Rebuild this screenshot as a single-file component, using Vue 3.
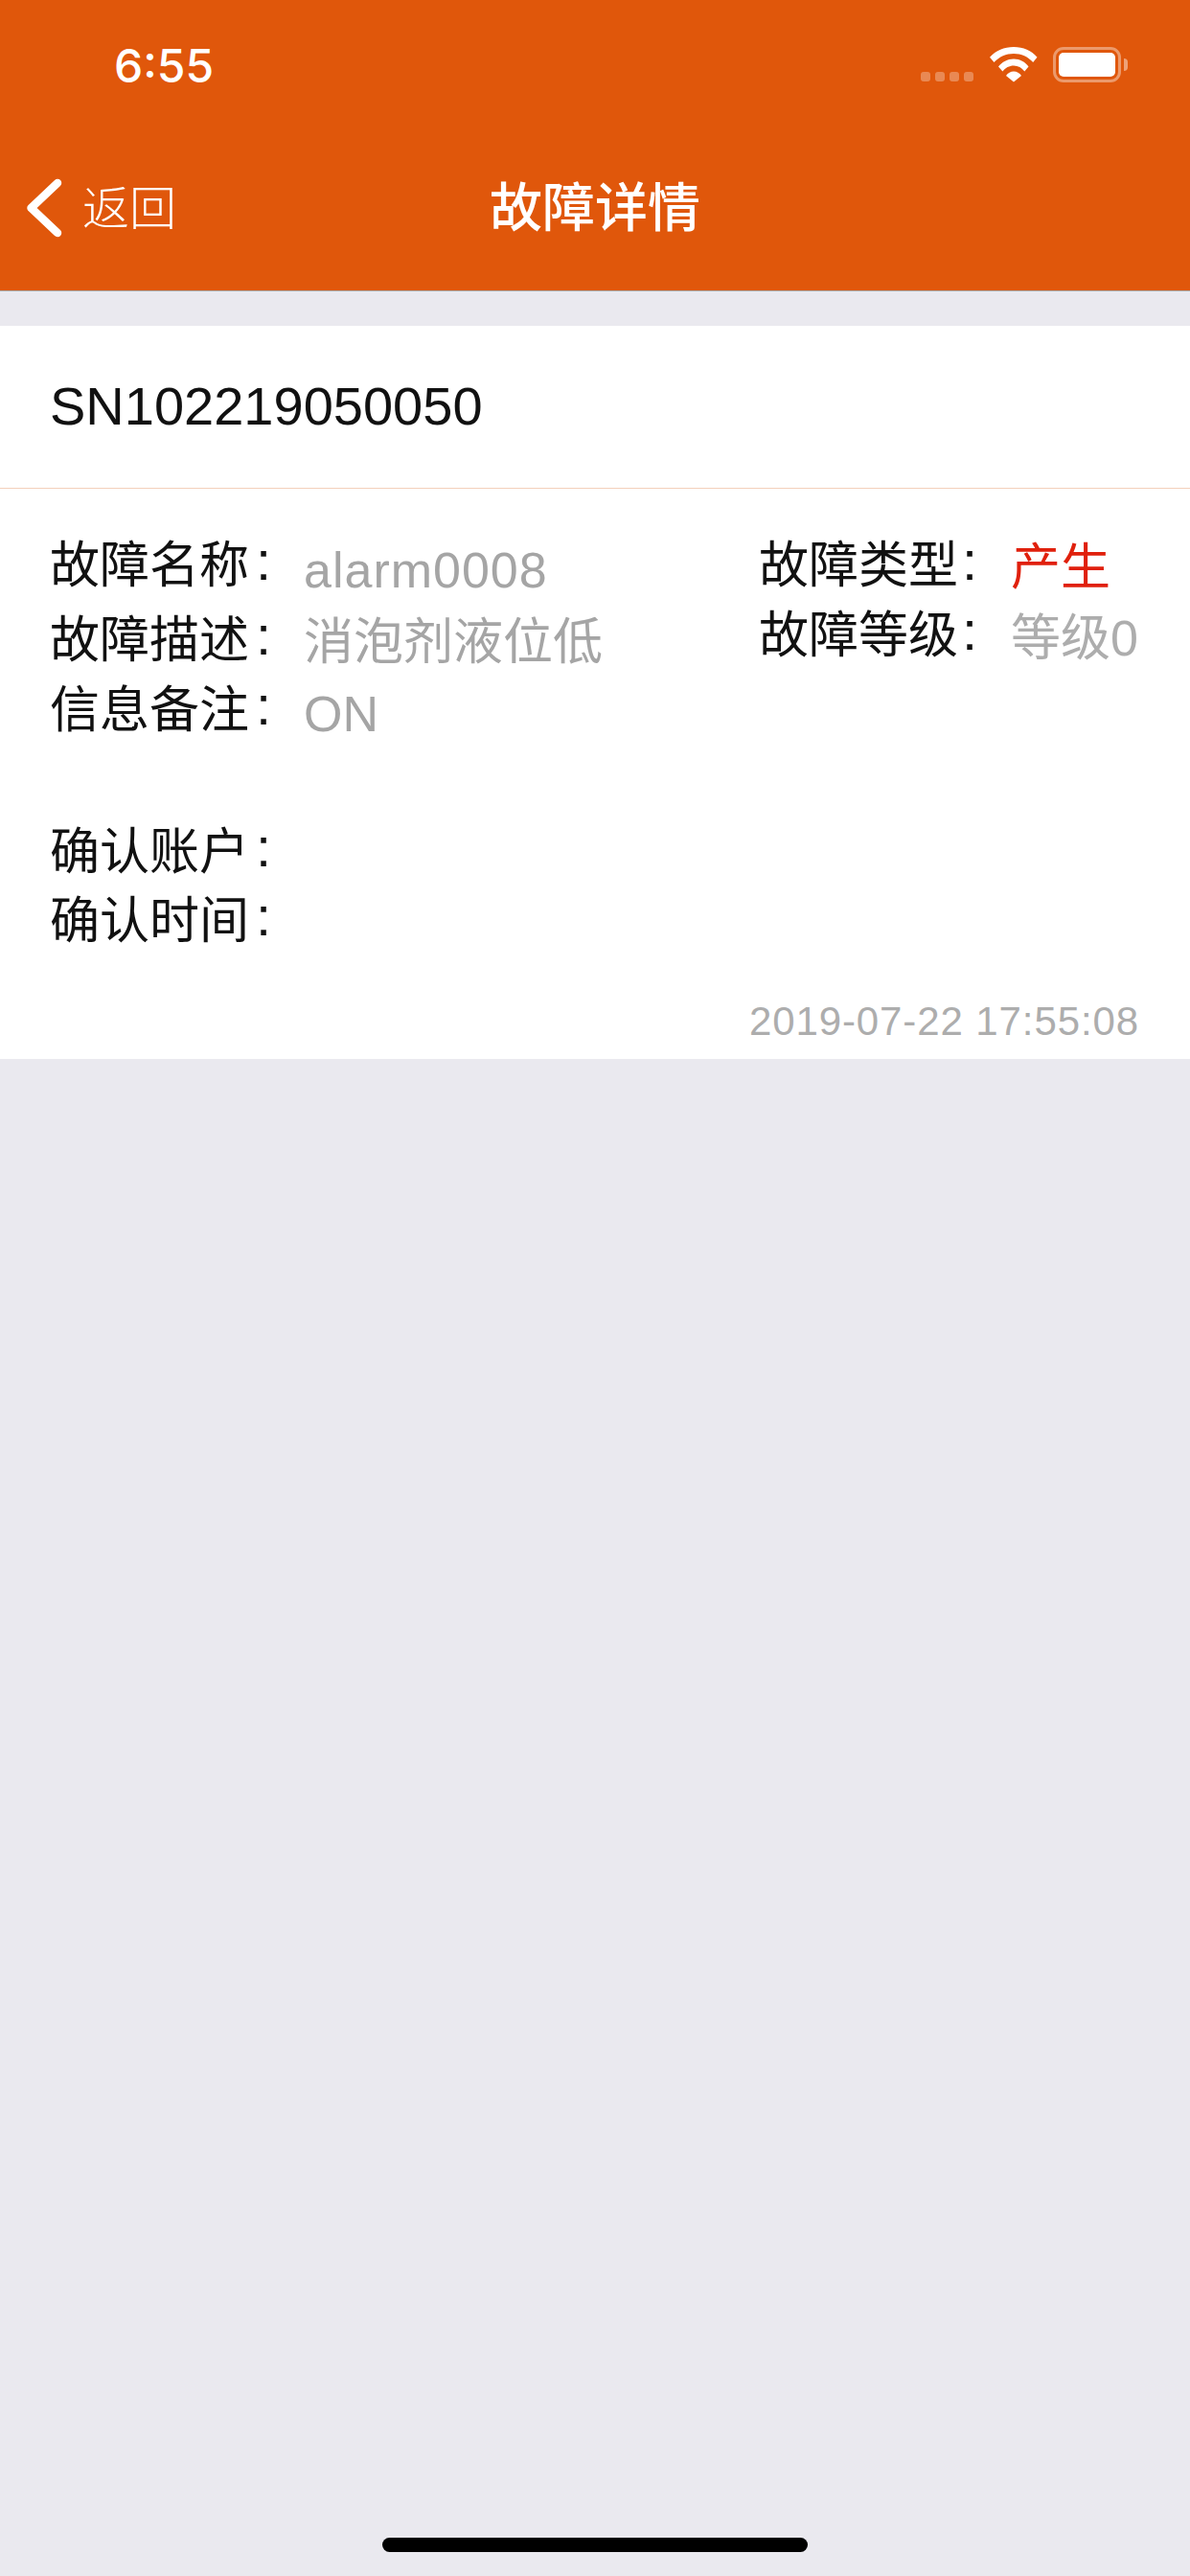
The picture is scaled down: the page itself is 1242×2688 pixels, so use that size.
<script setup>
const leftRows = [
  { label: '故障名称', value: 'alarm0008', cls: 'r1' },
  { label: '故障描述', value: '消泡剂液位低', cls: 'r2' },
  { label: '信息备注', value: 'ON', cls: 'r3' },
]
const confirmRows = ['确认账户', '确认时间']
</script>

<template>
  <div class="page">
    <header class="top">
      <div class="status">
        <span class="time">6:55</span>
        <div class="status-icons">
          <div class="dots"><i></i><i></i><i></i><i></i></div>
          <svg class="wifi" width="50" height="37" viewBox="0 0 50 37">
            <path d="M0 10.700C6.500 3.800 15 0 25 0s18.500 3.800 24.500 10.700L45.200 16C40 10.200 33 7 25 7S10 10.200 4.500 16z" fill="#fff"/>
            <path d="M9 20.500C13 15.500 18.500 12.500 25 12.500s12 3 15.500 8L36.300 25.500C33.500 21.800 29.500 19.500 25 19.500s-8.800 2.300-11.600 6z" fill="#fff"/>
            <path d="M17 30c2-2.800 4.800-4.500 8-4.500s6 1.700 8 4.500l-8 6.500z" fill="#fff"/>
          </svg>
          <div class="battery">
            <div class="shell"><div class="level"></div></div>
            <div class="cap"></div>
          </div>
        </div>
      </div>
      <div class="nav">
        <div class="back">
          <svg width="38" height="62" viewBox="0 0 38 62">
            <path d="M33 5 5.500 31 33 57" fill="none" stroke="#fff" stroke-width="8.500" stroke-linecap="round" stroke-linejoin="round"/>
          </svg>
          <span>返回</span>
        </div>
        <div class="title">故障详情</div>
        <div></div>
      </div>
    </header>

    <section class="card">
      <div class="sn">SN102219050050</div>
      <div class="body">
        <div class="columns">
          <div class="col">
            <div v-for="row in leftRows" :key="row.label" class="row" :class="row.cls">
              <span class="label">{{ row.label }}<b>:</b></span>
              <span class="value">{{ row.value }}</span>
            </div>
          </div>
          <div class="col col-right">
            <div class="row r1">
              <span class="label">故障类型<b>:</b></span>
              <span class="value red">产生</span>
            </div>
            <div class="row r4">
              <span class="label">故障等级<b>:</b></span>
              <span class="value">等级0</span>
            </div>
          </div>
        </div>
        <div class="confirm">
          <div v-for="label in confirmRows" :key="label" class="row c">
            <span class="label">{{ label }}<b>:</b></span>
          </div>
        </div>
        <div class="stamp">2019-07-22 17:55:08</div>
      </div>
    </section>

    <div class="spacer"></div>
    <div class="home"></div>
  </div>
</template>

<style>
html, body { margin: 0; background: #eae9ef; }
</style>

<style scoped>
.page {
  width: 1242px;
  height: 2688px;
  display: flex;
  flex-direction: column;
  background: #eae9ef;
  font-family: "Liberation Sans", "Noto Sans CJK SC", sans-serif;
  color: #111;
  overflow: hidden;
}
.top {
  height: 304px;
  box-sizing: border-box;
  background: #e0570b;
  border-bottom: 1px solid #a9a9a9;
  color: #fff;
  flex: none;
}
.status {
  height: 132px;
  display: flex;
  justify-content: space-between;
}
.time {
  font-family: Inter, sans-serif;
  font-weight: 500;
  font-size: 48px;
  line-height: 57px;
  margin: 40px 0 0 119px;
}
.status-icons {
  display: flex;
  align-items: flex-start;
  padding: 49px 65px 0 0;
}
.dots { display: flex; gap: 5px; margin-top: 26px; }
.dots i {
  width: 10px;
  height: 10px;
  border-radius: 3px;
  background: rgba(255, 255, 255, 0.3);
}
.wifi { margin-left: 17px; }
.battery { display: flex; align-items: center; margin-left: 16px; }
.shell {
  width: 71px;
  height: 37px;
  box-sizing: border-box;
  border: 3px solid rgba(255, 255, 255, 0.4);
  border-radius: 11px;
  padding: 3px;
}
.level { height: 100%; background: #fff; border-radius: 5px; }
.cap {
  width: 4px;
  height: 13px;
  margin-left: 3px;
  border-radius: 0 4px 4px 0;
  background: rgba(255, 255, 255, 0.45);
}
.nav {
  display: grid;
  grid-template-columns: 1fr auto 1fr;
  align-items: center;
  height: 170px;
}
.back {
  display: flex;
  align-items: center;
  gap: 21px;
  padding-left: 27px;
  margin-top: -1px;
  font-size: 49px;
  font-weight: 300;
}
.back svg { flex: none; }
.back span { position: relative; top: -3px; }
.title {
  font-size: 55px;
  font-weight: 500;
  line-height: 70px;
}
.card {
  margin-top: 36px;
  background: #fff;
  flex: none;
  height: 765px;
  display: flex;
  flex-direction: column;
}
.sn {
  height: 170px;
  box-sizing: border-box;
  border-bottom: 1px solid #f3d0bb;
  padding-left: 52px;
  font-size: 56px;
  line-height: 168px;
  color: #111;
}
.body {
  flex: 1;
  display: flex;
  flex-direction: column;
  padding: 43px 53px 0 52px;
}
.columns { display: flex; justify-content: space-between; }
.col { width: 738px; }
.col-right { width: 397px; }
.row {
  display: flex;
  align-items: flex-start;
  font-size: 52px;
  line-height: 74px;
}
.label { width: 265px; flex: none; white-space: nowrap; }
.col-right .label { width: 263px; }
.label b { font-weight: 400; font-size: 58px; line-height: 1; margin-left: 7px; position: relative; top: -3px; }
.col-right .label b { margin-left: 4px; }
.value { color: #a5a5a5; white-space: nowrap; }
.r1 .value { margin-top: 5px; letter-spacing: 1px; }
.r2 .value { margin-top: 2px; }
.r3 .value { margin-top: 4px; }
.col-right .r1 .value { margin-top: 2px; letter-spacing: 0; }
.red { color: #e0200c; }
.r1 { height: 78px; }
.r2 { height: 73px; }
.r3 { height: 74px; }
.col-right .r1 { height: 73px; }
.r4 .value { margin-top: 3px; color: #adadad; }
.confirm { margin-top: 74px; }
.c { height: 72px; }
.stamp {
  margin-top: auto;
  padding-bottom: 14px;
  text-align: right;
  font-size: 42px;
  line-height: 50px;
  letter-spacing: 0.9px;
  color: #adadad;
}
.spacer { flex: 1; }
.home {
  flex: none;
  width: 444px;
  height: 15px;
  margin: 0 auto 25px;
  border-radius: 8px;
  background: #000;
}
</style>
